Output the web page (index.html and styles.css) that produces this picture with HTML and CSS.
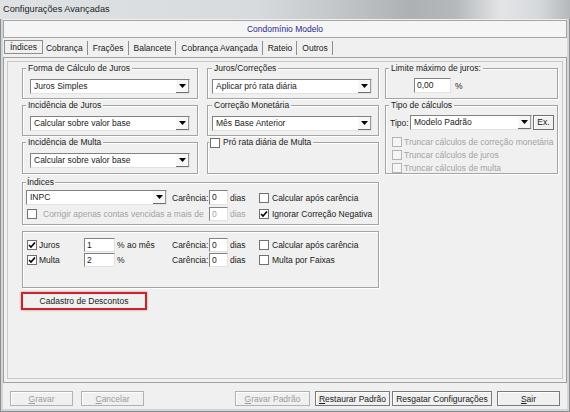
FILE: index.html
```html
<!DOCTYPE html>
<html lang="pt-BR">
<head>
<meta charset="utf-8">
<title>Configurações Avançadas</title>
<link rel="stylesheet" href="styles.css">
</head>
<body>
<div class="window">
  <div class="titlebar">Configurações Avançadas</div>
  <div class="frame">
    <div class="client">
      <div class="header">Condomínio Modelo</div>
      <div class="tabs">
        <span class="tab active">Índices</span>
        <span class="tab first">Cobrança</span>
        <span class="tab">Frações</span>
        <span class="tab">Balancete</span>
        <span class="tab">Cobrança Avançada</span>
        <span class="tab">Rateio</span>
        <span class="tab">Outros</span>
      </div>
      <div class="tabpanel">
        <div class="inner">
          <div class="grid">
            <div class="group c1">
              <span class="legend">Forma de Cálculo de Juros</span>
              <div class="combo"><span class="val">Juros Simples</span><span class="arrow"><svg width="7" height="6" viewBox="0 0 7 6"><path d="M0 0h7L3.5 4z" fill="#000"/></svg></span></div>
            </div>
            <div class="group c2">
              <span class="legend">Juros/Correções</span>
              <div class="combo"><span class="val">Aplicar pró rata diária</span><span class="arrow"><svg width="7" height="6" viewBox="0 0 7 6"><path d="M0 0h7L3.5 4z" fill="#000"/></svg></span></div>
            </div>
            <div class="group c3 limite">
              <span class="legend">Limite máximo de juros:</span>
              <div class="row"><span class="inp w37">0,00</span><span class="pct">%</span></div>
            </div>
            <div class="group c1">
              <span class="legend">Incidência de Juros</span>
              <div class="combo"><span class="val">Calcular sobre valor base</span><span class="arrow"><svg width="7" height="6" viewBox="0 0 7 6"><path d="M0 0h7L3.5 4z" fill="#000"/></svg></span></div>
            </div>
            <div class="group c2">
              <span class="legend">Correção Monetária</span>
              <div class="combo"><span class="val">Mês Base Anterior</span><span class="arrow"><svg width="7" height="6" viewBox="0 0 7 6"><path d="M0 0h7L3.5 4z" fill="#000"/></svg></span></div>
            </div>
            <div class="group c3 tipo">
              <span class="legend">Tipo de cálculos</span>
              <div class="row tiporow">
                <span class="lbl-tipo">Tipo:</span>
                <div class="combo grow"><span class="val">Modelo Padrão</span><span class="arrow"><svg width="7" height="6" viewBox="0 0 7 6"><path d="M0 0h7L3.5 4z" fill="#000"/></svg></span></div>
                <span class="ex">Ex.</span>
              </div>
              <div class="chkrow dis"><span class="cb"></span><span>Truncar cálculos de correção monetária</span></div>
              <div class="chkrow dis"><span class="cb"></span><span>Truncar cálculos de juros</span></div>
              <div class="chkrow dis"><span class="cb"></span><span>Truncar cálculos de multa</span></div>
            </div>
            <div class="group c1">
              <span class="legend">Incidência de Multa</span>
              <div class="combo"><span class="val">Calcular sobre valor base</span><span class="arrow"><svg width="7" height="6" viewBox="0 0 7 6"><path d="M0 0h7L3.5 4z" fill="#000"/></svg></span></div>
            </div>
            <div class="group c2">
              <span class="legend chklegend"><span class="cb"></span>Pró rata diária de Multa</span>
            </div>
          </div>

          <div class="group indices">
            <span class="legend">Índices</span>
            <div class="row r1">
              <div class="combo w141"><span class="val">INPC</span><span class="arrow"><svg width="7" height="6" viewBox="0 0 7 6"><path d="M0 0h7L3.5 4z" fill="#000"/></svg></span></div>
              <span class="car">Carência:</span>
              <span class="inp w19">0</span>
              <span class="dias">dias</span>
              <span class="cb"></span>
              <span>Calcular após carência</span>
            </div>
            <div class="row r2">
              <span class="cb disbox"></span>
              <span class="corrigir">Corrigir apenas contas vencidas a mais de</span>
              <span class="inp w19 disinp">0</span>
              <span class="dias gray">dias</span>
              <span class="cb"><svg width="8" height="8" viewBox="0 0 8 8"><path d="M1 4l2 2 4-4.5" fill="none" stroke="#000" stroke-width="1.6"/></svg></span>
              <span>Ignorar Correção Negativa</span>
            </div>
          </div>

          <div class="group taxas">
            <div class="row t1">
              <span class="cb"><svg width="8" height="8" viewBox="0 0 8 8"><path d="M1 4l2 2 4-4.5" fill="none" stroke="#000" stroke-width="1.6"/></svg></span>
              <span class="nm">Juros</span>
              <span class="inp w31">1</span>
              <span class="unit">% ao mês</span>
              <span class="car">Carência:</span>
              <span class="inp w19">0</span>
              <span class="dias">dias</span>
              <span class="cb"></span>
              <span>Calcular após carência</span>
            </div>
            <div class="row t2">
              <span class="cb"><svg width="8" height="8" viewBox="0 0 8 8"><path d="M1 4l2 2 4-4.5" fill="none" stroke="#000" stroke-width="1.6"/></svg></span>
              <span class="nm">Multa</span>
              <span class="inp w31">2</span>
              <span class="unit">%</span>
              <span class="car">Carência:</span>
              <span class="inp w19">0</span>
              <span class="dias">dias</span>
              <span class="cb"></span>
              <span>Multa por Faixas</span>
            </div>
          </div>

          <div class="btn desc">Cadastro de Descontos</div>
        </div>
      </div>
      <div class="bottom">
        <span class="btn b63 disabled"><u>G</u>ravar</span>
        <span class="btn b63 disabled gap8"><u>C</u>ancelar</span>
        <span class="btn b75 disabled gpad"><u>G</u>ravar Padrão</span>
        <span class="btn b75 gap5"><u>R</u>estaurar Padrão</span>
        <span class="btn b100 gap2">Resgatar Configurações</span>
        <span class="btn b63 gap5"><u>S</u>air</span>
      </div>
    </div>
  </div>
</div>
</body>
</html>
```

FILE: styles.css
```css
* { box-sizing: border-box; }
html, body { margin: 0; padding: 0; }
body {
  width: 570px;
  height: 412px;
  overflow: hidden;
  background: #f0f0f0;
  font-family: "Liberation Sans", Arial, sans-serif;
  font-size: 8.5px;
  color: #1a1a1a;
}
.window { width: 570px; height: 412px; display: flex; flex-direction: column; }
.titlebar {
  height: 19px;
  flex: none;
  padding-left: 3px;
  line-height: 18px;
  font-size: 9.2px;
  color: #1e1e1e;
  background: linear-gradient(to right, #dfe2e5 0%, #d8dbde 45%, #c2c5c8 60%, #aeb1b4 72%, #b6b9bc 80%, #e3e5e7 88%, #d4d7da 95%, #b5b8bb 100%);
}
.frame {
  flex: 1;
  display: flex;
  background: #d2d5d8;
  border: 1px solid #8b8e91;
  border-top: 0;
  padding: 0 2px 2px 2px;
}
.client {
  flex: 1;
  background: #f0f0f0;
  padding-top: 1px;
  display: flex;
  flex-direction: column;
}
.header {
  height: 18px;
  flex: none;
  border: 1px solid #a5a5a5;
  background: #f5f5f5;
  text-align: center;
  line-height: 16px;
  color: #28288f;
}
.tabs { height: 19px; flex: none; display: flex; align-items: center; padding-left: 1px; }
.tab { height: 14px; line-height: 14px; padding: 0 4px 0 5px; border-right: 1px solid #8e8e8e; white-space: nowrap; }
.tab.first { padding-left: 3px; }
.tab.active { border: 1px solid #8e8e8e; padding: 0 5px; height: 14px; line-height: 12px; margin-top: -2px; }
.tabpanel {
  height: 326px;
  flex: none;
  border: 1px solid #a0a0a0;
  padding: 3px;
}
.inner {
  height: 100%;
  border: 1px solid #c9c9c9;
  padding: 6px 0 0 14px;
}
.grid {
  display: grid;
  grid-template-columns: 176px 181px 179px;
  grid-template-rows: 31px 31px 32px;
  row-gap: 6px;
}
.group {
  position: relative;
  border: 1px solid #a4a4a4;
  box-shadow: inset 1px 1px 0 #fff, 1px 1px 0 #fff;
}
.legend {
  position: absolute;
  top: -6px;
  left: 3px;
  padding: 0 2px;
  line-height: 11px;
  background: #f0f0f0;
  white-space: nowrap;
  display: flex;
  align-items: center;
}
.c1 { padding: 10px 7px 0 7px; }
.c2 { margin-left: 9px; padding: 10px 6px 0 4px; }
.c2 .legend { left: 4px; }
.c3 { margin-left: 6px; }
.c3 .legend { left: 3px; }
.tipo { grid-row: 2 / 4; grid-column: 3; padding: 9px 3px 0 0; }
.limite { padding: 9px 0 0 28px; }
.chklegend { left: 1px !important; padding: 0 2px 0 1px; }
.chklegend .cb { margin-right: 3px; }

.combo {
  display: flex;
  height: 15px;
  border: 1px solid;
  border-color: #828282 #e2e2e2 #e2e2e2 #828282;
  background: #fff;
}
.combo .val { flex: 1; padding-left: 3px; line-height: 13px; white-space: nowrap; overflow: hidden; }
.combo .arrow {
  width: 13px;
  display: flex;
  align-items: center;
  justify-content: center;
  background: #f7f7f7;
  border-right: 1px solid #9a9a9a;
  border-bottom: 1px solid #6e6e6e;
  padding-top: 2px;
}
.grow { flex: 1; }
.w141 { width: 141px; flex: none; }

.row { display: flex; align-items: center; white-space: nowrap; }
.inp {
  height: 15px;
  flex: none;
  border: 1px solid;
  border-color: #828282 #e2e2e2 #e2e2e2 #828282;
  background: #fff;
  padding-left: 2px;
  line-height: 13px;
}
.w37 { width: 37px; }
.w31 { width: 31px; }
.w19 { width: 19px; }
.pct { margin-left: 4px; }

.tiporow { padding-left: 4px; height: 15px; }
.lbl-tipo { width: 20px; flex: none; }
.ex {
  width: 21px;
  height: 15px;
  margin-left: 1px;
  flex: none;
  border: 1px solid #707070;
  background: #f0f0f0;
  text-align: center;
  line-height: 13px;
  box-shadow: inset 1px 1px 0 #fff;
}
.chkrow { display: flex; align-items: center; height: 13px; padding-left: 6px; white-space: nowrap; }
.tiporow + .chkrow { margin-top: 5px; }
.chkrow .cb { margin-right: 2px; }
.dis { color: #a3a3a3; }
.dis .cb, .disbox { border-color: #b4b4b4; background: #f5f5f5; }

.cb {
  width: 10px;
  height: 10px;
  flex: none;
  border: 1px solid #707070;
  background: #fff;
  display: inline-flex;
  align-items: center;
  justify-content: center;
}

.indices { margin-top: 8px; width: 357px; height: 43px; padding: 7px 0 0 3px; }
.indices .legend { left: 3px; padding: 0 1px; }
.r1 { height: 15px; }
.r1 .combo { margin-right: 5px; }
.car { width: 37px; flex: none; }
.dias { width: 29px; margin-left: 2px; flex: none; }
.row .cb + span { margin-left: 3px; }
.r2 { height: 14px; margin-top: 2px; padding-left: 1px; }
.r2 .inp { height: 14px; }
.r2 .disbox + .corrigir { margin-left: 6px; }
.corrigir { width: 166px; flex: none; color: #a3a3a3; }
.disinp { color: #a3a3a3; }
.gray { color: #a3a3a3; }

.taxas { margin-top: 6px; width: 357px; height: 57px; padding: 6px 0 0 4px; }
.t1, .t2 { height: 14px; }
.t1 .inp, .t2 .inp { height: 14px; }
.t2 { margin-top: 1px; }
.row .cb + .nm { margin-left: 2px; }
.nm { width: 45px; flex: none; }
.unit { width: 55px; margin-left: 2px; flex: none; }

.btn {
  display: flex;
  align-items: center;
  justify-content: center;
  flex: none;
  height: 15px;
  border: 1px solid #7a7a7a;
  background: #f0f0f0;
  box-shadow: inset 1px 1px 0 #fff;
  white-space: nowrap;
}
.btn u { text-decoration: underline; text-underline-offset: 1px; }
.desc {
  width: 126px;
  height: 18px;
  margin: 4px 0 0 -1px;
  border: 2px solid #c5262d;
  box-shadow: 0 0 2px rgba(90, 0, 0, 0.45), inset 0 0 0 1px #e8e8e8;
}
.bottom { flex: 1; display: flex; padding: 8px 0 0 7px; }
.b63 { width: 63px; }
.b75 { width: 75px; }
.b100 { width: 100px; }
.gap8 { margin-left: 8px; }
.gap5 { margin-left: 5px; }
.gap2 { margin-left: 2px; }
.gpad { margin-left: 91px; }
.disabled { color: #9c9c9c; border-color: #b2b2b2; }
```
